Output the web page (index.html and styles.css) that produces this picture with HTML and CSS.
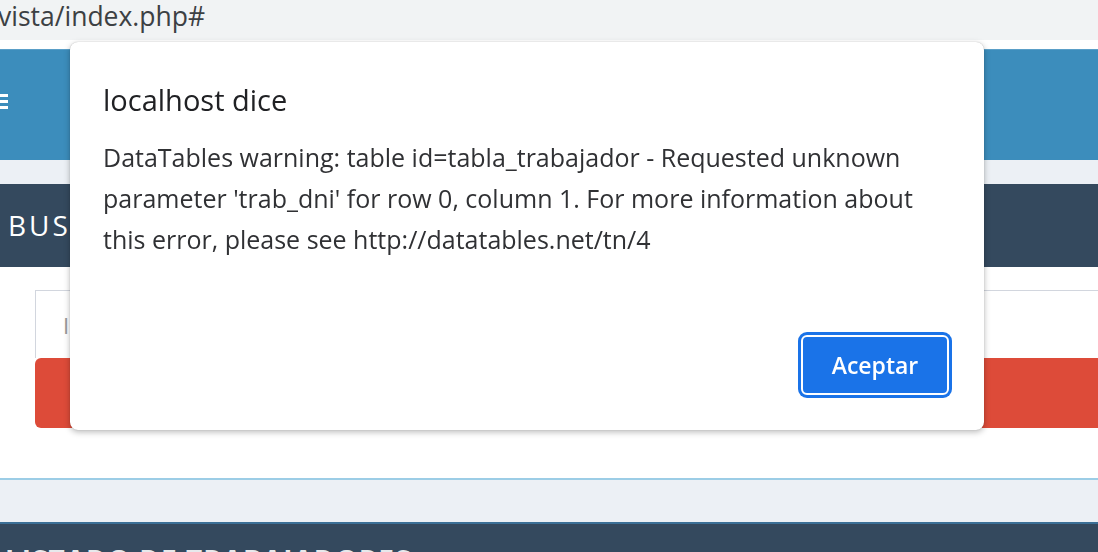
FILE: index.html
```html
<!DOCTYPE html>
<html lang="es">
<head>
<meta charset="utf-8">
<title>vista/index.php#</title>
<link rel="stylesheet" href="styles.css">
</head>
<body>
  <div class="urlbar"><span class="url">vista/index.php#</span></div>
  <div class="page">
    <header class="main-header">
      <svg class="hamburger" width="10" height="16" viewBox="0 0 10 16" aria-hidden="true">
        <rect x="0" y="0" width="8" height="3" fill="#ffffff"/>
        <rect x="0" y="6" width="8" height="3" fill="#ffffff"/>
        <rect x="0" y="12" width="8" height="3" fill="#ffffff"/>
      </svg>
    </header>
    <div class="strip"></div>
    <section class="box">
      <div class="box-header"><h3 class="box-title">BUSCAR TRABAJADOR</h3></div>
      <div class="box-body">
        <div class="search-input">Ingrese DNI</div>
        <div class="btn-search"></div>
      </div>
    </section>
    <div class="strip strip-lower"></div>
    <section class="box-list">
      <h3 class="list-title">LISTADO DE TRABAJADORES</h3>
    </section>
  </div>

  <div class="dialog" role="alertdialog">
    <div class="dialog-title">localhost dice</div>
    <div class="dialog-message">DataTables warning: table id=tabla_trabajador - Requested unknown parameter 'trab_dni' for row 0, column 1. For more information about this error, please see http://datatables.net/tn/4</div>
    <div class="dialog-actions">
      <button class="btn-accept">Aceptar</button>
    </div>
  </div>
</body>
</html>
```

FILE: styles.css
```css
* { box-sizing: border-box; }

html, body {
  margin: 0;
  padding: 0;
  width: 1098px;
  height: 552px;
  overflow: hidden;
  background: #ffffff;
  font-family: "Open Sans", "Noto Sans", sans-serif;
}

.urlbar {
  height: 40px;
  background: #f1f3f4;
  display: flex;
  align-items: center;
}

.url {
  font-size: 26.5px;
  color: #3c4043;
  margin-left: -2px;
  margin-top: -8px;
  white-space: nowrap;
}

.page {
  padding-top: 9px;
}

.main-header {
  height: 111px;
  background: #3c8dbc;
  border-top: 1px solid #5a9fc8;
  display: flex;
  align-items: center;
}

.hamburger {
  display: block;
  margin-top: -6px;
}

.strip {
  height: 24px;
  background: #ecf0f5;
}

.box-header {
  height: 83px;
  background: #34495e;
  display: flex;
  align-items: center;
  padding-left: 8px;
}

.box-title {
  margin: 0;
  font-size: 28px;
  letter-spacing: 3px;
  font-weight: 400;
  color: #ffffff;
  margin-top: -2px;
  white-space: nowrap;
}

.box-body {
  height: 213px;
  padding: 23px 0 0 35px;
  border-bottom: 2px solid #9ccde6;
  overflow: hidden;
}

.search-input {
  height: 68px;
  width: 1100px;
  border: 1px solid #d2d6de;
  border-bottom: none;
  padding-left: 27px;
  display: flex;
  align-items: center;
  font-size: 22px;
  color: #999999;
}

.btn-search {
  height: 70px;
  width: 1100px;
  background: #dd4b39;
  border-radius: 6px;
}

.strip-lower {
  height: 44px;
  border-bottom: 2px solid #3b6f96;
}

.box-list {
  height: 28px;
  overflow: hidden;
  background: #34495e;
  padding: 18px 0 0 5px;
}

.list-title {
  margin: 0;
  font-size: 28px;
  line-height: 36px;
  font-weight: 700;
  color: #e6e9ec;
  letter-spacing: 1px;
  white-space: nowrap;
}

.dialog {
  position: fixed;
  left: 70px;
  top: 42px;
  width: 914px;
  height: 388px;
  background: #ffffff;
  border-radius: 8px;
  box-shadow: 0 2px 6px rgba(0, 0, 0, 0.28), 0 0 1px rgba(0, 0, 0, 0.3);
  padding: 41px 32px 32px 33px;
  display: flex;
  flex-direction: column;
}

.dialog-title {
  font-size: 29px;
  line-height: 34px;
  color: #202124;
}

.dialog-message {
  margin-top: 20px;
  font-size: 25px;
  line-height: 41px;
  color: #303134;
}

.dialog-actions {
  margin-top: auto;
  display: flex;
  justify-content: flex-end;
}

.btn-accept {
  width: 148px;
  height: 60px;
  margin: 3px;
  background: #1a73e8;
  border: 2px solid #ffffff;
  border-radius: 6px;
  box-shadow: 0 0 0 3px #1a73e8;
  color: #ffffff;
  font-family: "Open Sans", "Noto Sans", sans-serif;
  font-size: 23px;
  font-weight: 600;
  padding: 0;
}
```
